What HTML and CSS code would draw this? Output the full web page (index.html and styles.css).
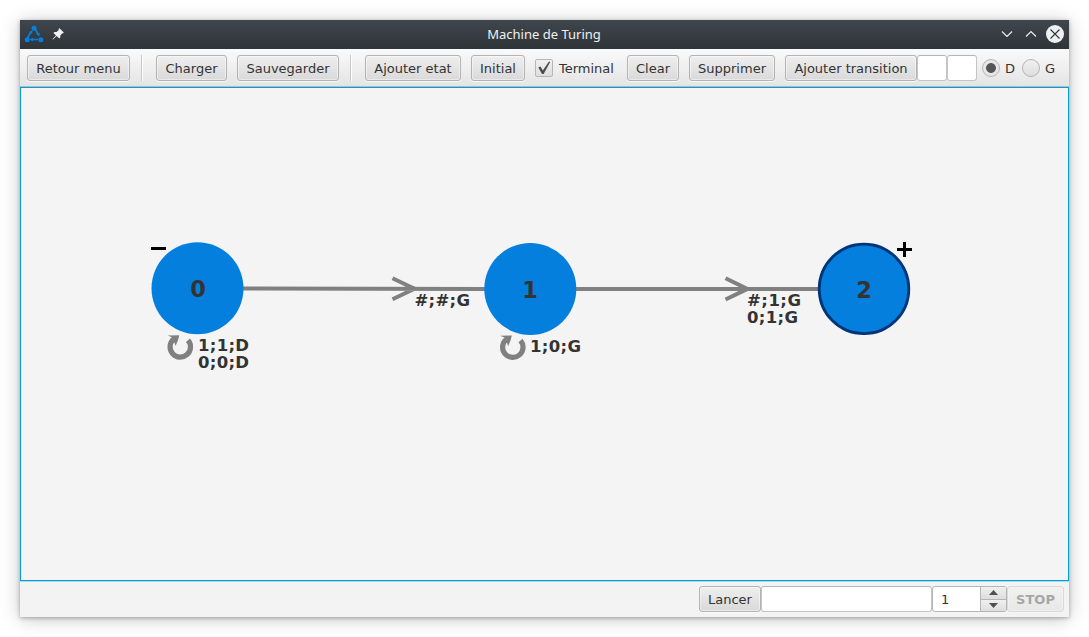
FILE: index.html
```html
<!DOCTYPE html>
<html lang="fr">
<head>
<meta charset="utf-8">
<title>Machine de Turing</title>
<link rel="stylesheet" href="styles.css">
</head>
<body>
<div class="window">
  <header class="titlebar">
    <div class="title-icons">
      <svg class="app-icon" width="20" height="20" viewBox="0 0 20 20">
        <g stroke="#057fdd" stroke-width="1.7" fill="none"><path d="M3.5 14 7 7.5M11.5 5.5 14 10M6 15.5H14"/></g>
        <g fill="#057fdd"><circle cx="10" cy="4.2" r="2.5"/><circle cx="3.2" cy="15.7" r="2.5"/><circle cx="16.8" cy="15.7" r="2.5"/><path d="M5 8.2 8.4 6.2 8 10zM12.2 10.4l3.4-1.8v3.6zM9 13.6v3.8l-3-1.9z"/></g>
      </svg>
      <svg class="pin-icon" width="12" height="12" viewBox="0 0 12 12"><path fill="#eff0f1" d="M7.5.2 11.800 4.500 10.900 5.400 10.200 5.300 8.300 7.600 8.300 9.500 7.300 10.500 4.600 8 1 11.500.5 11 4 7.400 1.500 5 2.500 3.900 4.500 4 6.800 2 6.600 1.100z"/></svg>
    </div>
    <h1 class="title">Machine de Turing</h1>
    <div class="window-controls">
      <svg width="64" height="20" viewBox="-2 0 64 20">
        <path d="M0 7.500 5 12.500 10 7.500M24 12.500l5-5 5 5" fill="none" stroke="#eff0f1" stroke-width="1.1"/>
        <circle cx="53" cy="10" r="9" fill="#eff0f1"/>
        <path d="M48.500 5.500l9 9M57.500 5.500l-9 9" stroke="#31363b" stroke-width="1.1"/>
      </svg>
    </div>
  </header>
  <div class="toolbar">
    <button class="btn w-retour">Retour menu</button>
    <span class="separator"></span>
    <button class="btn w-charger">Charger</button>
    <button class="btn w-sauver">Sauvegarder</button>
    <span class="separator"></span>
    <button class="btn w-etat">Ajouter etat</button>
    <button class="btn w-initial">Initial</button>
    <label class="option terminal"><span class="check"><svg width="16" height="16" viewBox="0 0 16 16"><path d="M2.300 7.400 4.600 6.600l2.200 4L13 1.600l1.200.4L7.600 14H6z" fill="#4c4c4c"/></svg></span>Terminal</label>
    <button class="btn w-clear">Clear</button>
    <button class="btn w-suppr">Supprimer</button>
    <div class="transition-group">
      <button class="btn w-trans">Ajouter transition</button>
      <span class="field symbol"></span>
      <span class="field symbol"></span>
      <label class="option radio-d"><span class="radio selected"></span>D</label>
      <label class="option radio-g"><span class="radio"></span>G</label>
    </div>
  </div>
  <main class="canvas">
    <svg class="graph" width="1047" height="492" viewBox="21 88 1047 492">
      <g class="edge">
        <path d="M243 288.400 485 289M392.500 278.300 414.500 288.700 392.500 299.300"/>
        <path d="M576 289H819M725.500 278.300 747.500 288.900 725.500 299.500"/>
      </g>
      <circle class="state" cx="197.500" cy="288.300" r="46"/>
      <circle class="state" cx="530.300" cy="288.900" r="46"/>
      <circle class="state final" cx="864" cy="288.900" r="44.800"/>
      <g class="mark"><path d="M151 248.500H166M897 249.500H912M904.500 242V257"/></g>
      <g id="loop-0">
        <path class="loop" d="M173.500 339.300A10.200 10.200 0 1 0 188 340.200"/>
        <path class="loop-head" d="M167.500 335.500 179.300 335.200 178.200 339.600 175.600 346 174.300 342 170 341.500 172 337.300z"/>
      </g>
      <use href="#loop-0" x="332.500" y=".3"/>
      <g class="state-label">
        <text x="198" y="297">0</text><text x="530" y="298">1</text><text x="864" y="298">2</text>
      </g>
      <g class="rule">
        <text x="198" y="351" textLength="51">1;1;D</text><text x="198" y="368" textLength="51">0;0;D</text>
        <text x="414.500" y="306" textLength="55.500">#;#;G</text><text x="530" y="352" textLength="51">1;0;G</text>
        <text x="747" y="306" textLength="54">#;1;G</text><text x="747" y="323" textLength="51">0;1;G</text>
      </g>
    </svg>
  </main>
  <footer class="runbar">
    <button class="btn w-lancer">Lancer</button>
    <span class="field tape"></span>
    <div class="spinner">
      <span class="spinner-value">1</span>
      <div class="steps">
        <span class="step"><svg width="9" height="5"><path d="M0 5 4.500 0 9 5z"/></svg></span>
        <span class="step"><svg width="9" height="5"><path d="M0 0 4.500 5 9 0z"/></svg></span>
      </div>
    </div>
    <button class="btn stop" disabled>STOP</button>
  </footer>
</div>
</body>
</html>
```
FILE: styles.css
```css
* { box-sizing: border-box; }
body {
  margin: 0;
  padding: 20px;
  height: 637px;
  overflow: hidden;
  background: #fff;
  font: 13px "DejaVu Sans", sans-serif;
  color: #333;
}
.window {
  width: 1049px;
  height: 597px;
  display: flex;
  flex-direction: column;
  background: #f3f3f3;
  box-shadow: 0 1px 4px rgba(0,0,0,.3), 0 2px 18px rgba(0,0,0,.22);
}
.titlebar {
  height: 29px;
  display: grid;
  grid-template-columns: 1fr auto 1fr;
  align-items: center;
  padding: 0 5px 1px 4px;
  background: linear-gradient(#3f464d, #2f3438);
}
.title-icons { display: flex; align-items: center; gap: 8px; }
.title-icons svg, .window-controls svg { display: block; }
.title {
  margin: 0;
  font: 400 13px/18px "Noto Sans", sans-serif;
  color: #eff0f1;
}
.window-controls { justify-self: end; }
.toolbar {
  height: 38px;
  display: flex;
  align-items: center;
  gap: 10px;
  padding: 1px 0 0 7px;
  background: linear-gradient(#fafafa, #e4e4e4);
  border-bottom: 1px solid #b8b8b8;
}
.btn {
  height: 26px;
  flex: none;
  padding: 2px 0 0;
  border: 1px solid #b3b3b3;
  border-radius: 3px;
  background: linear-gradient(#efefef, #d9d9d9);
  box-shadow: inset 0 0 0 1px rgba(255,255,255,.45), 0 1px 0 rgba(255,255,255,.7);
  font: 13px/22px "DejaVu Sans", sans-serif;
  color: #333;
  white-space: nowrap;
}
.w-retour { width: 103px; }
.w-charger { width: 71px; }
.w-sauver { width: 102px; }
.w-etat { width: 96px; }
.w-initial { width: 54px; }
.w-clear { width: 52px; }
.w-suppr { width: 86px; }
.w-trans { width: 132px; }
.w-lancer { width: 62px; }
.separator {
  width: 2px;
  height: 26px;
  margin: 0 3px 0 1px;
  border-left: 1px solid #c8c8c8;
  border-right: 1px solid #fff;
}
.option { display: flex; align-items: center; flex: none; }
.terminal { width: 82px; gap: 6px; }
.check, .radio {
  width: 18px;
  height: 18px;
  flex: none;
  border: 1px solid #b5b5b5;
  background: linear-gradient(#f1f1f1, #dedede);
}
.check { border-radius: 2px; }
.check svg { display: block; }
.radio { border-radius: 50%; }
.radio.selected { background: radial-gradient(circle, #555 0 4.5px, #e7e7e7 5.3px); }
.transition-group { display: flex; align-items: center; }
.field {
  height: 26px;
  border: 1px solid #c5c5c5;
  border-top-color: #b5b5b5;
  border-radius: 3px;
  background: #fff;
}
.symbol { width: 30px; }
.radio-d { width: 40px; margin-left: 5px; gap: 5px; }
.radio-g { gap: 5px; }
.canvas {
  height: 494px;
  border: 1px solid #039ed3;
  background: #f4f4f4;
}
.graph { display: block; }
.edge { fill: none; stroke: #808080; stroke-width: 4; }
.state { fill: #057fdd; }
.final { stroke: #00357a; stroke-width: 2.8; }
.mark { stroke: #000; stroke-width: 3; }
.loop { fill: none; stroke: #808080; stroke-width: 5.2; }
.loop-head { fill: #808080; }
.state-label { font-size: 22.5px; font-weight: 700; fill: #333; text-anchor: middle; }
.rule { font-size: 16.5px; font-weight: 700; fill: #333; }
.runbar {
  height: 36px;
  display: flex;
  align-items: center;
  justify-content: flex-end;
  padding: 0 5px 1px 0;
  border-top: 1px solid #a9dded;
}
.tape { width: 171px; }
.spinner {
  width: 75px;
  height: 26px;
  display: flex;
  border: 1px solid #b5b5b5;
  border-radius: 3px;
  background: #fff;
  overflow: hidden;
}
.spinner-value { flex: 1; padding: 2px 0 0 8px; line-height: 22px; }
.steps {
  width: 26px;
  display: flex;
  flex-direction: column;
  border-left: 1px solid #b5b5b5;
}
.step {
  flex: 1;
  display: flex;
  align-items: center;
  justify-content: center;
  background: linear-gradient(#f0f0f0, #dedede);
}
.step + .step { border-top: 1px solid #b5b5b5; }
.step path { fill: #505050; }
.stop { width: 57px; font-weight: 700; opacity: .4; }
```
